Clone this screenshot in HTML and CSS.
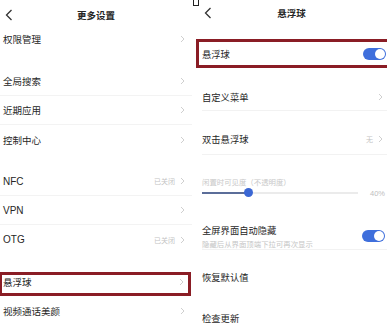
FILE: index.html
```html
<!DOCTYPE html>
<html>
  <head>
    <title>悬浮球设置</title>
    <link rel="stylesheet" href="styles.css">
  </head>
  <body>
    <div class="screen">
      <!-- 左侧：更多设置 -->
      <div class="panel left">
        <div class="hdr">
          <svg class="back" viewBox="0 0 8 12"><path d="M6.5 1L1.5 6l5 5" /></svg>
          <span class="ttl">更多设置</span>
          <span></span>
        </div>
        <div class="row first"><span>权限管理</span><svg class="chev" viewBox="0 0 5 8"><path d="M1 1l3 3-3 3" /></svg></div>

        <div class="group">
          <div class="row line"><span>全局搜索</span><svg class="chev" viewBox="0 0 5 8"><path d="M1 1l3 3-3 3" /></svg></div>
          <div class="row line"><span>近期应用</span><svg class="chev" viewBox="0 0 5 8"><path d="M1 1l3 3-3 3" /></svg></div>
          <div class="row"><span>控制中心</span><svg class="chev" viewBox="0 0 5 8"><path d="M1 1l3 3-3 3" /></svg></div>
        </div>

        <div class="group tight">
          <div class="row line"><span class="latin">NFC</span><span class="val">已关闭<svg class="chev" viewBox="0 0 5 8"><path d="M1 1l3 3-3 3" /></svg></span></div>
          <div class="row line"><span class="latin">VPN</span><svg class="chev" viewBox="0 0 5 8"><path d="M1 1l3 3-3 3" /></svg></div>
          <div class="row"><span class="latin">OTG</span><span class="val">已关闭<svg class="chev" viewBox="0 0 5 8"><path d="M1 1l3 3-3 3" /></svg></span></div>
        </div>

        <div class="row marked"><span>悬浮球</span><svg class="chev" viewBox="0 0 5 8"><path d="M1 1l3 3-3 3" /></svg></div>
        <div class="row"><span>视频通话美颜</span><svg class="chev" viewBox="0 0 5 8"><path d="M1 1l3 3-3 3" /></svg></div>
      </div>

      <!-- 右侧：悬浮球 -->
      <div class="panel right">
        <div class="hdr">
          <svg class="back" viewBox="0 0 8 12"><path d="M6.5 1L1.5 6l5 5" /></svg>
          <span class="ttl">悬浮球</span>
          <span></span>
        </div>
        <div class="item ball"><span>悬浮球</span><span class="toggle"></span></div>
        <div class="item menu line"><span>自定义菜单</span><svg class="chev" viewBox="0 0 5 8"><path d="M1 1l3 3-3 3" /></svg></div>
        <div class="item dbl line"><span>双击悬浮球</span><span class="val">无<svg class="chev" viewBox="0 0 5 8"><path d="M1 1l3 3-3 3" /></svg></span></div>
        <div class="opacity">
          <div class="hint">闲置时可见度（不透明度）</div>
          <div class="slider">
            <div class="track"><div class="fill" style="width: 46px"></div><span class="knob" style="left: 46px"></span></div>
            <span class="pct">40%</span>
          </div>
        </div>
        <div class="item hide line">
          <div class="txt">
            <div>全屏界面自动隐藏</div>
            <div class="sub">隐藏后从界面顶端下拉可再次显示</div>
          </div>
          <span class="toggle"></span>
        </div>
        <div class="item reset"><span>恢复默认值</span></div>
        <div class="item update"><span>检查更新</span></div>
      </div>

      <span class="corner"></span>
    </div>
  </body>
</html>
```

FILE: styles.css
```css
body {
  margin: 0;
  background: #fff;
  font-family: "Noto Sans CJK SC", "Noto Sans", sans-serif;
  color: #262626;
}
.screen {
  position: relative;
  display: flex;
  width: 387px;
  height: 324px;
  overflow: hidden;
}
.panel {
  height: 324px;
  overflow: hidden;
}
.left {
  width: 192px;
}
.right {
  width: 195px;
}
.hdr {
  display: grid;
  grid-template-columns: 20px 1fr 20px;
  align-items: center;
  height: 22px;
  padding-top: 4px;
}
.right .hdr {
  height: 26px;
  padding-top: 0;
}
.back {
  width: 8px;
  height: 12px;
  margin-left: 5px;
  fill: none;
  stroke: #333;
  stroke-width: 1.3;
}
.right .back {
  margin-left: 12px;
}
.ttl {
  text-align: center;
  font-size: 9.5px;
  font-weight: bold;
}
.right .ttl {
  padding-left: 4px;
}
.chev {
  width: 5px;
  height: 8px;
  fill: none;
  stroke: #cfcfcf;
  stroke-width: 1;
}
.val {
  display: flex;
  align-items: center;
  gap: 5px;
  font-size: 7px;
  color: #c4c4c4;
}

/* 左侧列表 */
.row {
  display: flex;
  align-items: center;
  justify-content: space-between;
  box-sizing: border-box;
  height: 29px;
  padding: 0 7px 0 3px;
  font-size: 9.5px;
}
.row.first {
  height: 26px;
}
.row.line {
  border-bottom: 1px solid #f3f3f3;
}
.group {
  margin-top: 15px;
}
.group.tight {
  margin-top: 13px;
}
.latin {
  font-family: "Liberation Sans", sans-serif;
  font-size: 10px;
}
.row.marked {
  margin-top: 18px;
  height: 24px;
  padding: 0 4px 5px 1px;
  border: 3px solid #8a1d25;
  border-left-width: 2px;
  width: 191px;
}

/* 右侧设置 */
.item {
  display: flex;
  align-items: center;
  justify-content: space-between;
  box-sizing: border-box;
  margin-left: 10px;
  padding-right: 4px;
  font-size: 9.3px;
}
.item.line {
  border-bottom: 1px solid #f2f2f2;
}
.item.ball {
  margin: 13px 0 0 4px;
  height: 29px;
  padding: 0 1px 0 3px;
  border: 3px solid #8a1d25;
  border-right: none;
}
.item.menu {
  height: 43px;
  padding-top: 15px;
}
.item.dbl {
  height: 44px;
  padding-top: 13px;
}
.toggle {
  position: relative;
  width: 23px;
  height: 12px;
  border-radius: 6px;
  background: #3f6fdc;
}
.toggle::after {
  content: "";
  position: absolute;
  right: 1px;
  top: 1px;
  width: 10px;
  height: 10px;
  border-radius: 50%;
  background: #fff;
}
.opacity {
  height: 50px;
  box-sizing: border-box;
  padding: 22px 2px 0 10px;
}
.hint {
  font-size: 7.4px;
  line-height: 10px;
  color: #c8c8c8;
}
.slider {
  display: flex;
  align-items: center;
  justify-content: space-between;
  height: 10px;
  margin-top: 1px;
}
.track {
  position: relative;
  width: 156px;
  height: 2px;
  background: #ebebeb;
}
.fill {
  height: 2px;
  background: #5b6d99;
}
.knob {
  position: absolute;
  top: -4px;
  width: 9px;
  height: 9px;
  margin-left: -4px;
  border-radius: 50%;
  background: #3b67d4;
}
.pct {
  font-family: "Liberation Sans", sans-serif;
  font-size: 7.5px;
  color: #c0c0c0;
}
.item.hide {
  height: 45px;
  padding-top: 17px;
  padding-right: 2px;
}
.txt {
  line-height: 12px;
}
.sub {
  margin-top: 3px;
  font-size: 7.4px;
  line-height: 9px;
  color: #c6c6c6;
}
.item.reset {
  height: 50px;
  padding-top: 4px;
}
.item.update {
  height: 36px;
}
.corner {
  position: absolute;
  left: 193px;
  top: -1px;
  width: 4px;
  height: 5px;
  border: 1px solid #222;
}
```
